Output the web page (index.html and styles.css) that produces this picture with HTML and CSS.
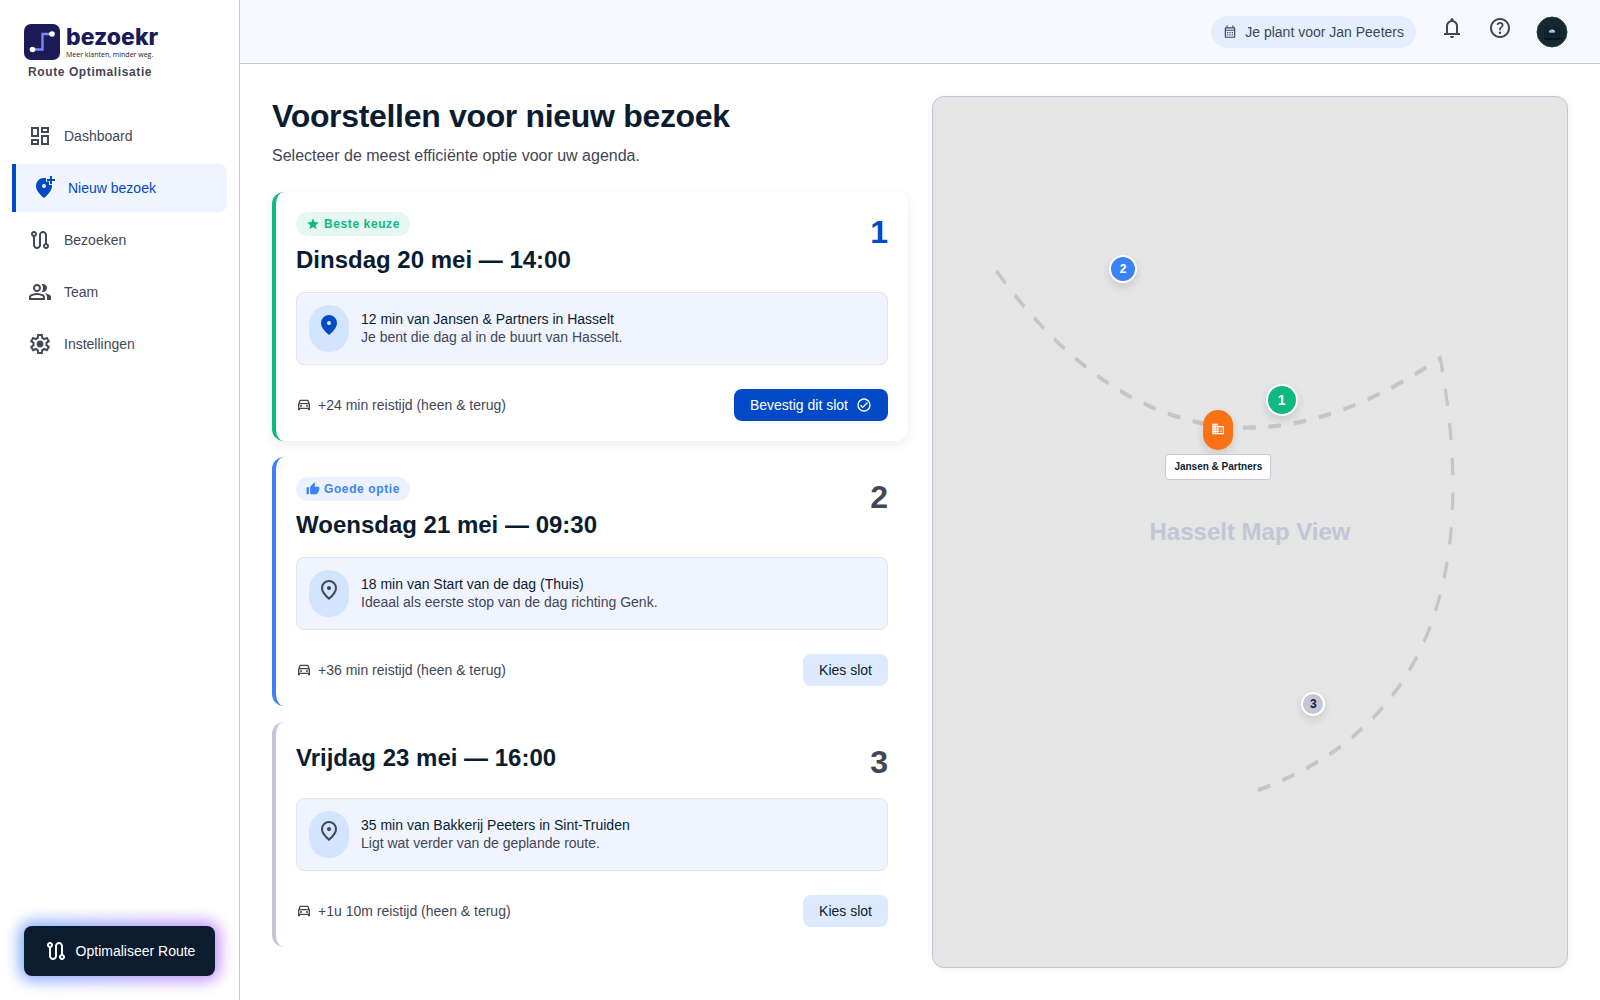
FILE: index.html
```html
<!DOCTYPE html>
<html lang="nl">
<head>
<meta charset="utf-8">
<meta name="viewport" content="width=device-width, initial-scale=1">
<title>bezoekr – Voorstellen voor nieuw bezoek</title>
<link rel="stylesheet" href="styles.css">
</head>
<body>
<svg class="sprite" aria-hidden="true">
  <symbol id="i-dashboard" viewBox="0 0 24 24"><path d="M19 5v2h-4V5h4M9 5v6H5V5h4m10 8v6h-4v-6h4M9 17v2H5v-2h4M21 3h-8v6h8V3zM11 3H3v10h8V3zm10 8h-8v10h8V11zm-10 4H3v6h8v-6z"/></symbol>
  <symbol id="i-add-location" viewBox="0 0 24 24"><path fill-rule="evenodd" d="M14 2.25V5.500h3V9h2.900c.07.300.1.600.1 1.200 0 3.300-2.700 7.300-8 11.800-5.300-4.500-8-8.500-8-11.800C4 5.200 7.600 2 12 2c.7 0 1.400.1 2 .250zM12 12a2 2 0 1 0 0-4 2 2 0 0 0 0 4z"/><path d="M18 0h2v3h3v2h-3v3h-2V5h-3V3h3z"/></symbol>
  <symbol id="i-route" viewBox="0 0 24 24"><path d="M19 15.180V7c0-2.210-1.790-4-4-4s-4 1.790-4 4v10c0 1.100-.9 2-2 2s-2-.9-2-2V8.820C8.160 8.400 9 7.300 9 6c0-1.660-1.340-3-3-3S3 4.340 3 6c0 1.300.84 2.400 2 2.820V17c0 2.210 1.790 4 4 4s4-1.790 4-4V7c0-1.100.9-2 2-2s2 .9 2 2v8.180c-1.160.41-2 1.510-2 2.820 0 1.660 1.340 3 3 3s3-1.340 3-3c0-1.300-.84-2.400-2-2.820zM6 7c-.55 0-1-.45-1-1s.45-1 1-1 1 .45 1 1-.45 1-1 1zm12 12c-.55 0-1-.45-1-1s.45-1 1-1 1 .45 1 1-.45 1-1 1z"/></symbol>
  <symbol id="i-group" viewBox="0 -960 960 960"><path d="M40-160v-112q0-34 17.500-62.500T104-378q62-31 126-46.500T360-440q66 0 130 15.500T616-378q29 15 46.500 43.500T680-272v112H40Zm720 0v-120q0-44-24.500-84.500T666-434q51 6 96 20.500t84 35.500q36 20 55 44.500t19 53.500v120H760ZM360-480q-66 0-113-47t-47-113q0-66 47-113t113-47q66 0 113 47t47 113q0 66-47 113t-113 47Zm400-160q0 66-47 113t-113 47q-11 0-28-2.500t-28-5.500q27-32 41.500-71t14.500-81q0-42-14.500-81T544-792q14-5 28-6.500t28-1.500q66 0 113 47t47 113ZM120-240h480v-32q0-11-5.500-20T580-306q-54-27-109-40.500T360-360q-56 0-111 13.500T140-306q-9 5-14.500 14t-5.500 20v32Zm240-320q33 0 56.500-23.500T440-640q0-33-23.500-56.500T360-720q-33 0-56.500 23.500T280-640q0 33 23.500 56.500T360-560Z"/></symbol>
  <symbol id="i-settings" viewBox="0 -960 960 960"><path d="m370-80-16-128q-13-5-24.500-12T307-235l-119 50L78-375l103-78q-1-7-1-13.500v-27q0-6.500 1-13.500L78-585l110-190 119 50q11-8 23-15t24-12l16-128h220l16 128q13 5 24.500 12t22.500 15l119-50 110 190-103 78q1 7 1 13.500v27q0 6.500-2 13.500l103 78-110 190-118-50q-11 8-23 15t-24 12L590-80H370Zm70-80h79l14-106q31-8 57.500-23.500T639-327l99 41 39-68-86-65q5-14 7-29.500t2-31.500q0-16-2-31.500t-7-29.500l86-65-39-68-99 42q-22-23-48.500-38.500T533-694l-13-106h-79l-14 106q-31 8-57.500 23.500T321-633l-99-41-39 68 86 64q-5 15-7 30t-2 32q0 16 2 31t7 30l-86 65 39 68 99-42q22 23 48.500 38.500T427-266l13 106Zm42-180q58 0 99-41t41-99q0-58-41-99t-99-41q-59 0-99.500 41T342-480q0 58 40.500 99t99.500 41Z"/></symbol>
  <symbol id="i-bell" viewBox="0 -960 960 960"><path d="M160-200v-80h80v-280q0-83 50-147.500T420-792v-28q0-25 17.500-42.500T480-880q25 0 42.500 17.500T540-820v28q80 20 130 84.500T720-560v280h80v80H160Zm320 120q-33 0-56.500-23.500T400-160h160q0 33-23.500 56.500T480-80ZM320-280h320v-280q0-66-47-113t-113-47q-66 0-113 47t-47 113v280Z"/></symbol>
  <symbol id="i-help" viewBox="0 -960 960 960"><path d="M478-240q21 0 35.500-14.500T528-290q0-21-14.500-35.500T478-340q-21 0-35.500 14.500T428-290q0 21 14.500 35.500T478-240Zm-36-154h74q0-33 7.500-52t42.500-52q26-26 41-49.500t15-56.500q0-56-41-86t-97-30q-57 0-92.500 30T342-618l66 26q5-18 22.500-39t53.500-21q32 0 48 17.500t16 38.500q0 20-12 37.500T506-526q-44 39-54 59t-10 73Zm38 314q-83 0-156-31.500T197-197q-54-54-85.500-127T80-480q0-83 31.500-156T197-763q54-54 127-85.500T480-880q83 0 156 31.500T763-763q54 54 85.500 127T880-480q0 83-31.500 156T763-197q-54 54-127 85.500T480-80Zm0-80q134 0 227-93t93-227q0-134-93-227t-227-93q-134 0-227 93t-93 227q0 134 93 227t227 93Z"/></symbol>
  <symbol id="i-calendar" viewBox="0 0 24 24"><path fill-rule="evenodd" d="M6 1h2v3h8V1h2v3h1a2 2 0 0 1 2 2v14a2 2 0 0 1-2 2H5a2 2 0 0 1-2-2V6a2 2 0 0 1 2-2h1zM5 10v10h14V10zM5 6v2h14V6z"/><path d="M7 12h2v2H7zm4 0h2v2h-2zm4 0h2v2h-2zm-8 4h2v2H7zm4 0h2v2h-2zm4 0h2v2h-2z"/></symbol>
  <symbol id="i-pin" viewBox="0 -960 960 960"><path d="M480-480q33 0 56.500-23.500T560-560q0-33-23.500-56.500T480-640q-33 0-56.500 23.500T400-560q0 33 23.500 56.500T480-480Zm0 294q122-112 181-203.500T720-552q0-109-69.500-178.500T480-800q-101 0-170.500 69.500T240-552q0 71 59 162.500T480-186Zm0 106Q319-217 239.500-334.500T160-552q0-150 96.500-239T480-880q127 0 223.500 89T800-552q0 100-79.500 217.500T480-80Z"/></symbol>
  <symbol id="i-pin-fill" viewBox="0 -960 960 960"><path d="M480-480q33 0 56.500-23.500T560-560q0-33-23.500-56.500T480-640q-33 0-56.500 23.500T400-560q0 33 23.500 56.500T480-480Zm0 400Q319-217 239.500-334.500T160-552q0-150 96.500-239T480-880q127 0 223.500 89T800-552q0 100-79.500 217.500T480-80Z"/></symbol>
  <symbol id="i-car" viewBox="0 0 24 24"><path d="M18.920 5.010C18.720 4.420 18.160 4 17.500 4h-11c-.66 0-1.210.42-1.420 1.010L3 11v8c0 .55.45 1 1 1h1c.55 0 1-.45 1-1v-1h12v1c0 .55.45 1 1 1h1c.55 0 1-.45 1-1v-8l-2.080-5.990zM6.850 6h10.290l1.080 3.110H5.770L6.850 6zM19 16H5v-5h14v5z"/><circle cx="7.500" cy="13.500" r="1.500"/><circle cx="16.500" cy="13.500" r="1.500"/></symbol>
  <symbol id="i-star" viewBox="0 0 24 24"><path d="M12 17.270 18.180 21l-1.640-7.030L22 9.240l-7.190-.61L12 2 9.190 8.630 2 9.240l5.460 4.730L5.820 21z"/></symbol>
  <symbol id="i-thumb" viewBox="0 0 24 24"><path d="M1 21h4V9H1v12zm22-11c0-1.100-.9-2-2-2h-6.310l.95-4.570.03-.32c0-.41-.17-.79-.44-1.060L14.170 1 7.590 7.590C7.220 7.950 7 8.450 7 9v10c0 1.100.9 2 2 2h9c.83 0 1.540-.5 1.840-1.220l3.020-7.050c.09-.23.14-.47.14-.73v-2z"/></symbol>
  <symbol id="i-check" viewBox="0 0 24 24"><path d="M12 2a10 10 0 1 0 0 20 10 10 0 0 0 0-20zm0 18a8 8 0 1 1 0-16 8 8 0 0 1 0 16zm4.590-12.420L10 14.170l-2.590-2.580L6 13l4 4 8-8z"/></symbol>
  <symbol id="i-domain" viewBox="0 0 24 24"><path d="M12 7V3H2v18h20V7H12zM6 19H4v-2h2v2zm0-4H4v-2h2v2zm0-4H4V9h2v2zm0-4H4V5h2v2zm4 12H8v-2h2v2zm0-4H8v-2h2v2zm0-4H8V9h2v2zm0-4H8V5h2v2zm10 12h-8v-2h2v-2h-2v-2h2v-2h-2V9h8v10zm-2-8h-2v2h2v-2zm0 4h-2v2h2v-2z"/></symbol>
</svg>

<div class="app">
  <aside class="sidebar">
    <div class="brand">
      <div class="logo">
        <svg class="logo-mark" viewBox="0 0 36 36" aria-hidden="true">
          <rect width="36" height="36" rx="7" fill="#1b1b58"/>
          <path d="M8.500 25.500H18.500V10H28" fill="none" stroke="#7d84f4" stroke-width="2.400"/>
          <circle cx="8.500" cy="25.500" r="2.800" fill="#fff"/>
          <circle cx="28" cy="10" r="2.800" fill="#fff"/>
        </svg>
        <div class="logo-text">
          <span class="logo-name">bezoekr</span>
          <span class="logo-tag">Meer klanten, minder weg.</span>
        </div>
      </div>
      <p class="brand-sub">Route Optimalisatie</p>
    </div>
    <nav class="nav" aria-label="Hoofdmenu">
      <a class="nav-item" href="#dashboard"><svg class="icon"><use href="#i-dashboard"/></svg>Dashboard</a>
      <a class="nav-item active" href="#nieuw" aria-current="page"><svg class="icon"><use href="#i-add-location"/></svg>Nieuw bezoek</a>
      <a class="nav-item" href="#bezoeken"><svg class="icon"><use href="#i-route"/></svg>Bezoeken</a>
      <a class="nav-item" href="#team"><svg class="icon"><use href="#i-group"/></svg>Team</a>
      <a class="nav-item" href="#instellingen"><svg class="icon"><use href="#i-settings"/></svg>Instellingen</a>
    </nav>
    <div class="optimize-wrap">
      <button class="optimize" type="button"><svg class="icon"><use href="#i-route"/></svg>Optimaliseer Route</button>
    </div>
  </aside>

  <div class="content">
    <header class="topbar">
      <div class="planning"><svg class="icon-sm"><use href="#i-calendar"/></svg>Je plant voor Jan Peeters</div>
      <button class="icon-button" type="button" aria-label="Meldingen"><svg class="icon"><use href="#i-bell"/></svg></button>
      <button class="icon-button" type="button" aria-label="Help"><svg class="icon"><use href="#i-help"/></svg></button>
      <svg class="avatar" viewBox="0 0 32 32" role="img" aria-label="Profiel">
        <circle cx="16" cy="16" r="15" fill="#162832" stroke="#2d3b46"/>
        <path d="M8 10h16v12H8z" fill="#10222c"/>
        <path d="M8 23h17" stroke="#0a141b" stroke-width="2"/>
        <path d="M13 16.500a3 3 0 0 1 6 0z" fill="#dfe5e8"/>
        <path d="M15 14v3M17 15v2" stroke="#7c888f"/>
      </svg>
    </header>

    <main class="main">
      <section class="proposals">
        <div class="intro">
          <h1>Voorstellen voor nieuw bezoek</h1>
          <p>Selecteer de meest efficiënte optie voor uw agenda.</p>
        </div>

        <article class="card best">
          <div class="card-head">
            <div class="card-title">
              <span class="badge"><svg class="icon-sm"><use href="#i-star"/></svg>Beste keuze</span>
              <h2>Dinsdag 20 mei — 14:00</h2>
            </div>
            <span class="rank">1</span>
          </div>
          <div class="reason">
            <span class="reason-icon"><svg class="icon"><use href="#i-pin-fill"/></svg></span>
            <div class="reason-text"><p class="reason-main">12 min van Jansen &amp; Partners in Hasselt</p><p>Je bent die dag al in de buurt van Hasselt.</p></div>
          </div>
          <div class="card-foot">
            <span class="travel"><svg class="icon-md"><use href="#i-car"/></svg>+24 min reistijd (heen &amp; terug)</span>
            <button class="button primary" type="button">Bevestig dit slot<svg class="icon-md"><use href="#i-check"/></svg></button>
          </div>
        </article>

        <article class="card good">
          <div class="card-head">
            <div class="card-title">
              <span class="badge"><svg class="icon-sm"><use href="#i-thumb"/></svg>Goede optie</span>
              <h2>Woensdag 21 mei — 09:30</h2>
            </div>
            <span class="rank">2</span>
          </div>
          <div class="reason">
            <span class="reason-icon"><svg class="icon"><use href="#i-pin"/></svg></span>
            <div class="reason-text"><p class="reason-main">18 min van Start van de dag (Thuis)</p><p>Ideaal als eerste stop van de dag richting Genk.</p></div>
          </div>
          <div class="card-foot">
            <span class="travel"><svg class="icon-md"><use href="#i-car"/></svg>+36 min reistijd (heen &amp; terug)</span>
            <button class="button" type="button">Kies slot</button>
          </div>
        </article>

        <article class="card">
          <div class="card-head">
            <div class="card-title"><h2>Vrijdag 23 mei — 16:00</h2></div>
            <span class="rank">3</span>
          </div>
          <div class="reason">
            <span class="reason-icon"><svg class="icon"><use href="#i-pin"/></svg></span>
            <div class="reason-text"><p class="reason-main">35 min van Bakkerij Peeters in Sint-Truiden</p><p>Ligt wat verder van de geplande route.</p></div>
          </div>
          <div class="card-foot">
            <span class="travel"><svg class="icon-md"><use href="#i-car"/></svg>+1u 10m reistijd (heen &amp; terug)</span>
            <button class="button" type="button">Kies slot</button>
          </div>
        </article>
      </section>

      <section class="map" aria-label="Kaart">
        <svg class="map-route" viewBox="0 0 100 100" preserveAspectRatio="none" aria-hidden="true">
          <path d="M10 20Q40 50 80 30Q90 70 50 80" fill="none" stroke="#c6c6c6" stroke-width="0.5" stroke-dasharray="2 2"/>
        </svg>
        <p class="map-label">Hasselt Map View</p>
        <span class="marker marker-2">2</span>
        <span class="marker marker-1">1</span>
        <span class="marker marker-3">3</span>
        <div class="place">
          <span class="place-pin"><svg class="icon-sm"><use href="#i-domain"/></svg></span>
          <span class="place-name">Jansen &amp; Partners</span>
        </div>
      </section>
    </main>
  </div>
</div>
</body>
</html>
```
FILE: styles.css
```css
:root {
  --ink: #0b1c30;
  --muted: #434655;
  --primary: #004ac6;
  --line: #c3c6d7;
  --green: #10b981;
  --blue: #3b82f6;
  --tint: #eff4ff;
  --tint-strong: #dce9ff;
}

* { box-sizing: border-box; }

body {
  margin: 0;
  background: #fff;
  color: var(--ink);
  font-family: "Liberation Sans", Arial, sans-serif;
  font-size: 14px;
  line-height: 20px;
}

h1, h2, p { margin: 0; }
button { font: inherit; border: 0; cursor: pointer; }
svg { fill: currentColor; flex: none; }

.sprite { display: none; }
.icon { width: 24px; height: 24px; }
.icon-md { width: 16px; height: 16px; }
.icon-sm { width: 14px; height: 14px; }

.app { display: flex; min-height: 100vh; }

/* Sidebar */
.sidebar {
  display: flex;
  flex-direction: column;
  flex: none;
  width: 240px;
  padding: 24px 0;
  border-right: 1px solid var(--line);
}
.brand { padding: 0 24px; }
.logo { display: flex; gap: 6px; }
.logo-mark { width: 36px; height: 36px; }
.logo-text { display: flex; flex-direction: column; white-space: nowrap; }
.logo-name {
  font-family: Inter, sans-serif;
  font-size: 23px;
  line-height: 26px;
  font-weight: 800;
  color: #1b1b58;
}
.logo-tag {
  font-family: "Open Sans", sans-serif;
  font-size: 7px;
  line-height: 10px;
  color: #222;
}
.brand-sub {
  padding: 4px;
  font-size: 12px;
  line-height: 16px;
  font-weight: 700;
  letter-spacing: 0.05em;
  color: var(--muted);
}
.nav {
  display: flex;
  flex-direction: column;
  flex: 1;
  gap: 4px;
  padding: 28px 12px 0;
}
.nav-item {
  display: flex;
  align-items: center;
  gap: 12px;
  height: 48px;
  padding: 0 16px;
  border-radius: 8px;
  color: var(--muted);
  text-decoration: none;
}
.nav-item.active {
  border-left: 4px solid var(--primary);
  border-radius: 0 8px 8px 0;
  background: var(--tint);
  color: var(--primary);
}
.optimize-wrap { position: relative; z-index: 0; margin: 0 24px; }
.optimize-wrap::before {
  content: "";
  position: absolute;
  inset: -4px;
  z-index: -1;
  border-radius: 12px;
  background: linear-gradient(90deg, #3b82f6, #a855f7);
  filter: blur(8px);
  opacity: 0.7;
}
.optimize {
  display: flex;
  align-items: center;
  justify-content: center;
  gap: 8px;
  width: 100%;
  height: 50px;
  border-radius: 8px;
  background: var(--ink);
  color: #fff;
}

/* Top bar */
.content { flex: 1; display: flex; flex-direction: column; min-width: 0; }
.topbar {
  display: flex;
  justify-content: flex-end;
  align-items: center;
  gap: 24px;
  height: 64px;
  padding: 0 32px;
  border-bottom: 1px solid var(--line);
  background: #f8f9ff;
}
.planning {
  display: flex;
  align-items: center;
  gap: 8px;
  height: 32px;
  padding: 0 12px;
  border-radius: 16px;
  background: #e5eeff;
  color: var(--muted);
}
.icon-button {
  display: flex;
  height: 32px;
  padding: 0;
  background: none;
  color: var(--muted);
}
.avatar { width: 32px; height: 32px; }

/* Proposals */
.main {
  display: grid;
  grid-template-columns: 1fr 1fr;
  gap: 24px;
  flex: 1;
  padding: 32px;
}
.proposals { display: flex; flex-direction: column; gap: 16px; }
.intro { display: flex; flex-direction: column; gap: 8px; padding-bottom: 8px; }
h1 { font-size: 32px; line-height: 40px; letter-spacing: -0.01em; }
.intro p { font-size: 16px; line-height: 24px; color: var(--muted); }

.card {
  padding: 20px;
  border-left: 4px solid var(--line);
  border-radius: 12px;
  background: #fff;
}
.card.best {
  border-left-color: var(--green);
  box-shadow: 0 4px 12px rgba(0, 0, 0, 0.08);
}
.card.good { border-left-color: var(--blue); }
.card-head { display: flex; justify-content: space-between; align-items: flex-start; }
.card-title { display: flex; flex-direction: column; align-items: flex-start; gap: 8px; }
.badge {
  display: flex;
  align-items: center;
  gap: 4px;
  height: 24px;
  padding: 0 10px;
  border-radius: 12px;
  font-size: 12px;
  font-weight: 700;
  letter-spacing: 0.05em;
}
.best .badge { background: #e7f8f2; color: var(--green); }
.good .badge { background: #ebf2fe; color: var(--blue); }
h2 { font-size: 24px; line-height: 32px; }
.rank { font-size: 32px; line-height: 40px; font-weight: 700; color: var(--muted); }
.best .rank { color: var(--primary); }

.reason {
  display: flex;
  align-items: center;
  gap: 12px;
  margin: 16px 0 24px;
  padding: 12px;
  border: 1px solid #e1e4f2;
  border-radius: 8px;
  background: var(--tint);
  line-height: 18px;
  color: var(--muted);
}
.reason-icon {
  display: flex;
  padding: 8px 8px 15px;
  border-radius: 20px;
  background: #d3e4fe;
}
.best .reason-icon { color: var(--primary); }
.reason-text { padding-bottom: 2px; }
.reason-main { color: var(--ink); }

.card-foot { display: flex; justify-content: space-between; align-items: center; }
.travel { display: flex; align-items: center; gap: 6px; color: var(--muted); }
.button {
  display: flex;
  align-items: center;
  gap: 8px;
  height: 32px;
  padding: 0 16px;
  border-radius: 8px;
  background: var(--tint-strong);
  color: var(--ink);
}
.button.primary { background: var(--primary); color: #fff; }

/* Map */
.map {
  position: relative;
  display: flex;
  align-items: center;
  justify-content: center;
  overflow: hidden;
  border: 1px solid var(--line);
  border-radius: 12px;
  background: #e5e5e5;
  box-shadow: 0 1px 8px rgba(0, 0, 0, 0.06);
}
.map-route { position: absolute; inset: 0; width: 100%; height: 100%; }
.map-label { position: relative; font-size: 24px; line-height: 32px; font-weight: 700; color: var(--line); }
.marker {
  position: absolute;
  display: flex;
  align-items: center;
  justify-content: center;
  margin-top: -2px;
  transform: translate(-50%, -50%);
  border: 2px solid #fff;
  border-radius: 50%;
  font-size: 12px;
  font-weight: 700;
  color: #fff;
  box-shadow: 0 4px 8px rgba(0, 0, 0, 0.12);
}
.marker-1 { left: 55%; top: 35%; width: 32px; height: 32px; background: var(--green); font-size: 14px; }
.marker-2 { left: 30%; top: 20%; width: 28px; height: 28px; background: var(--blue); }
.marker-3 { left: 60%; top: 70%; width: 24px; height: 24px; background: var(--line); color: var(--ink); }
.place {
  position: absolute;
  left: 45%;
  top: 40%;
  display: flex;
  flex-direction: column;
  align-items: center;
  gap: 4px;
  transform: translate(-50%, -50%);
}
.place-pin {
  display: flex;
  padding: 12px 8px 14px;
  border-radius: 15px;
  background: #f97316;
  color: #fff;
  box-shadow: 0 4px 8px rgba(0, 0, 0, 0.12);
}
.place-name {
  padding: 4px 8px;
  border: 1px solid var(--line);
  border-radius: 4px;
  background: #fff;
  font-size: 10px;
  line-height: 16px;
  font-weight: 700;
  white-space: nowrap;
}
```
